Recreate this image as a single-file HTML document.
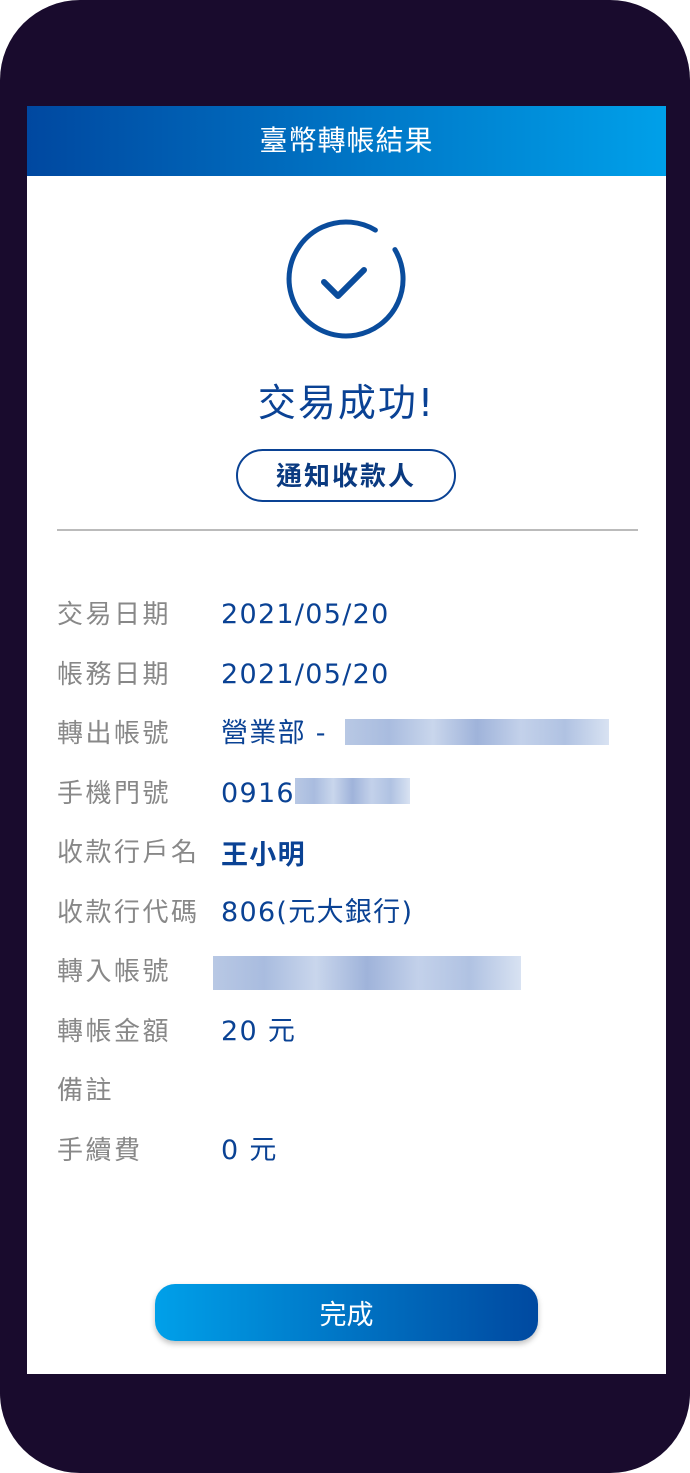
<!DOCTYPE html>
<html><head><meta charset="utf-8"><style>
*{margin:0;padding:0;box-sizing:border-box}
body{width:690px;height:1473px;background:#fff;font-family:"Liberation Sans","Noto Sans CJK TC",sans-serif;position:relative;overflow:hidden}
.frame{position:absolute;left:0;top:0;width:690px;height:1473px;background:#190b2d;border-radius:80px}
.screen{position:absolute;left:27px;top:106px;width:639px;height:1268px;background:#fff;overflow:hidden}
.hdr{height:70px;background:linear-gradient(90deg,#0048a0,#00a0e9);color:#fff;font-size:28px;letter-spacing:1px;text-align:center;line-height:66px;font-family:"Noto Sans CJK TC",sans-serif}
.abs{position:absolute}
.title{left:0;width:639px;top:266px;text-align:center;font-size:38px;letter-spacing:2px;color:#0a4294;font-family:"DejaVu Sans","Noto Sans CJK TC",sans-serif}
.nbtn{left:209px;top:343px;width:220px;height:53px;border:2px solid #0a4294;border-radius:27px;text-align:center;line-height:48px;font-size:26px;letter-spacing:2px;font-weight:bold;color:#0a3a80;font-family:"Noto Sans CJK TC",sans-serif}
.div{left:30px;top:423px;width:581px;height:2px;background:#bbb}
.lab{left:30px;font-size:26px;letter-spacing:2.5px;color:#888;font-family:"Noto Sans CJK TC",sans-serif;line-height:32px}
.val{left:194px;font-size:27px;letter-spacing:1.3px;color:#0a4294;font-family:"DejaVu Sans","Noto Sans CJK TC",sans-serif;line-height:32px;margin-top:2px}
.blur{position:absolute;height:26px;background:linear-gradient(90deg,#b8c8e4,#a9bcdf,#c9d6ec,#9fb3da,#c3d1ea,#b0c2e2,#d8e2f2)}
.done{left:128px;top:1178px;width:383px;height:57px;border-radius:20px;background:linear-gradient(90deg,#00a0e9,#0049a0);color:#fff;font-size:27px;text-align:center;line-height:57px;box-shadow:0 3px 6px rgba(0,0,0,.25);font-family:"Noto Sans CJK TC",sans-serif}
</style></head><body>
<div class="frame"></div>
<div class="screen">
<div class="hdr">臺幣轉帳結果</div>
<svg class="abs" style="left:254px;top:108px" width="130" height="130" viewBox="0 0 130 130">
<path d="M113.9 35.6 A57 57 0 1 1 94.4 16.1" fill="none" stroke="#0a4c9c" stroke-width="5" stroke-linecap="round"/>
<path d="M43 68 L57 82 L83 56" fill="none" stroke="#0a4c9c" stroke-width="6" stroke-linecap="round" stroke-linejoin="round"/>
</svg>
<div class="abs title">交易成功!</div>
<div class="abs nbtn">通知收款人</div>
<div class="abs div"></div>
<div class="abs lab" style="top:491px">交易日期</div><div class="abs val" style="top:491px">2021/05/20</div>
<div class="abs lab" style="top:551px">帳務日期</div><div class="abs val" style="top:551px">2021/05/20</div>
<div class="abs lab" style="top:610px">轉出帳號</div><div class="abs val" style="top:610px">營業部 -</div>
<div class="blur" style="left:318px;top:613px;width:264px"></div>
<div class="abs lab" style="top:670px">手機門號</div><div class="abs val" style="top:670px">0916</div>
<div class="blur" style="left:268px;top:672px;width:115px"></div>
<div class="abs lab" style="top:729px">收款行戶名</div><div class="abs val" style="top:729px;font-weight:bold;font-family:'Noto Sans CJK TC',sans-serif">王小明</div>
<div class="abs lab" style="top:789px">收款行代碼</div><div class="abs val" style="top:789px">806(元大銀行)</div>
<div class="abs lab" style="top:848px">轉入帳號</div>
<div class="blur" style="left:186px;top:850px;width:308px;height:34px"></div>
<div class="abs lab" style="top:908px">轉帳金額</div><div class="abs val" style="top:908px">20 元</div>
<div class="abs lab" style="top:967px">備註</div>
<div class="abs lab" style="top:1027px">手續費</div><div class="abs val" style="top:1027px">0 元</div>
<div class="abs done">完成</div>
</div>
</body></html>
